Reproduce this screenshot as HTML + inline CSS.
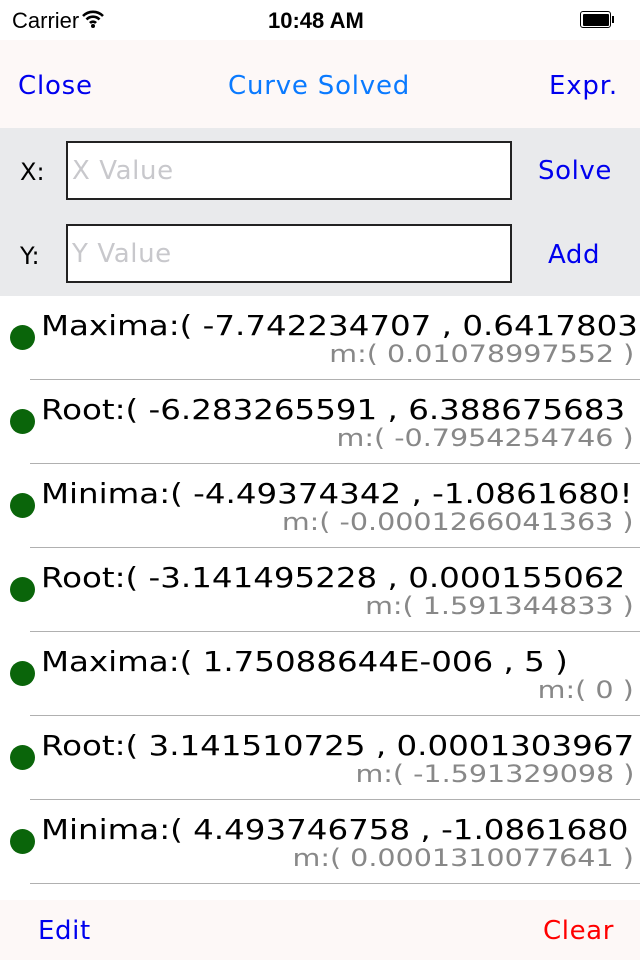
<!DOCTYPE html>
<html><head><meta charset="utf-8"><style>
*{margin:0;padding:0;box-sizing:border-box}
body{width:640px;height:960px;overflow:hidden;background:#fff;font-family:"DejaVu Sans","Liberation Sans",sans-serif;position:relative}
.status{position:absolute;top:0;left:0;width:640px;height:40px;background:#fff;font-family:"Liberation Sans",sans-serif;font-size:22px}
.nav{position:absolute;top:40px;left:0;width:640px;height:88px;background:#fdf8f7}
.nav span{position:absolute;top:31px;font-size:26px;letter-spacing:0.8px}
.inp{position:absolute;top:128px;left:0;width:640px;height:168px;background:#e9eaec}
.lbl{position:absolute;left:20px;font-size:24px;color:#000}
.box{position:absolute;left:66px;width:446px;height:59px;background:#fff;border:2px solid #222;font-size:26px;color:#c8c8cc;padding:13px 0 0 4px;letter-spacing:0.6px}
.btn{position:absolute;font-size:26px;color:#0000ee;letter-spacing:0.6px}
.row{position:absolute;left:0;width:640px;height:84px;overflow:hidden}
.row .dot{position:absolute;left:10px;top:29px;width:25px;height:25px;border-radius:50%;background:#0a650a}
.row .t{position:absolute;left:41px;top:13px;font-size:28px;color:#000;white-space:nowrap;transform:scaleX(1.16);transform-origin:0 0}
.row .s{position:absolute;right:6px;top:44px;font-size:24px;color:#888;white-space:nowrap;transform:scaleX(1.19);transform-origin:100% 0}
.row .ln{position:absolute;left:30px;right:0;bottom:0;height:1px;background:#b0b0b0}
.bot{position:absolute;top:900px;left:0;width:640px;height:60px;background:#fdf8f7}
</style></head><body>
<div class="status">
<span style="position:absolute;left:12px;top:8px">Carrier</span>
<svg style="position:absolute;left:82px;top:10px" width="22" height="18" viewBox="0 0 22 18"><path d="M1 6a14 14 0 0 1 20 0M4.5 9.5a9 9 0 0 1 13 0M8 13a4 4 0 0 1 6 0" fill="none" stroke="#000" stroke-width="2.6"/><circle cx="11" cy="16" r="2" fill="#000"/></svg>
<span style="position:absolute;left:268px;top:8px;font-weight:bold">10:48 AM</span>
<div style="position:absolute;left:580px;top:11px;width:31px;height:17px;border:1.5px solid #000;border-radius:3px;padding:1.5px"><div style="width:100%;height:100%;background:#000;border-radius:1px"></div></div>
<div style="position:absolute;left:612px;top:16px;width:2px;height:7px;background:#000"></div>
</div>
<div class="nav">
<span style="left:18px;color:#0000ee">Close</span>
<span style="left:228px;color:#0a7aff">Curve Solved</span>
<span style="left:549px;color:#0000ee">Expr.</span>
</div>
<div class="inp">
<span class="lbl" style="top:30px">X:</span>
<div class="box" style="top:13px">X Value</div>
<span class="btn" style="left:538px;top:28px">Solve</span>
<span class="lbl" style="top:114px">Y:</span>
<div class="box" style="top:96px">Y Value</div>
<span class="btn" style="left:548px;top:112px">Add</span>
</div>
<div class="row" style="top:296px"><div class="dot"></div><div class="t">Maxima:( -7.742234707 , 0.6417803</div><div class="s">m:( 0.01078997552 )</div><div class="ln"></div></div>
<div class="row" style="top:380px"><div class="dot"></div><div class="t">Root:( -6.283265591 , 6.388675683</div><div class="s">m:( -0.7954254746 )</div><div class="ln"></div></div>
<div class="row" style="top:464px"><div class="dot"></div><div class="t">Minima:( -4.49374342 , -1.0861680!</div><div class="s">m:( -0.0001266041363 )</div><div class="ln"></div></div>
<div class="row" style="top:548px"><div class="dot"></div><div class="t">Root:( -3.141495228 , 0.000155062</div><div class="s">m:( 1.591344833 )</div><div class="ln"></div></div>
<div class="row" style="top:632px"><div class="dot"></div><div class="t">Maxima:( 1.75088644E-006 , 5 )</div><div class="s">m:( 0 )</div><div class="ln"></div></div>
<div class="row" style="top:716px"><div class="dot"></div><div class="t">Root:( 3.141510725 , 0.0001303967</div><div class="s">m:( -1.591329098 )</div><div class="ln"></div></div>
<div class="row" style="top:800px"><div class="dot"></div><div class="t">Minima:( 4.493746758 , -1.0861680</div><div class="s">m:( 0.0001310077641 )</div><div class="ln"></div></div>
<div class="row" style="top:884px"><div class="dot"></div><div class="t">Root:( 6.283280940 , 7.2093604857</div></div>
<div class="bot">
<span style="position:absolute;left:38px;top:16px;font-size:26px;color:#0000ee;letter-spacing:0.6px">Edit</span>
<span style="position:absolute;left:543px;top:16px;font-size:26px;color:#ff0000;letter-spacing:0.6px">Clear</span>
</div>
</body></html>
